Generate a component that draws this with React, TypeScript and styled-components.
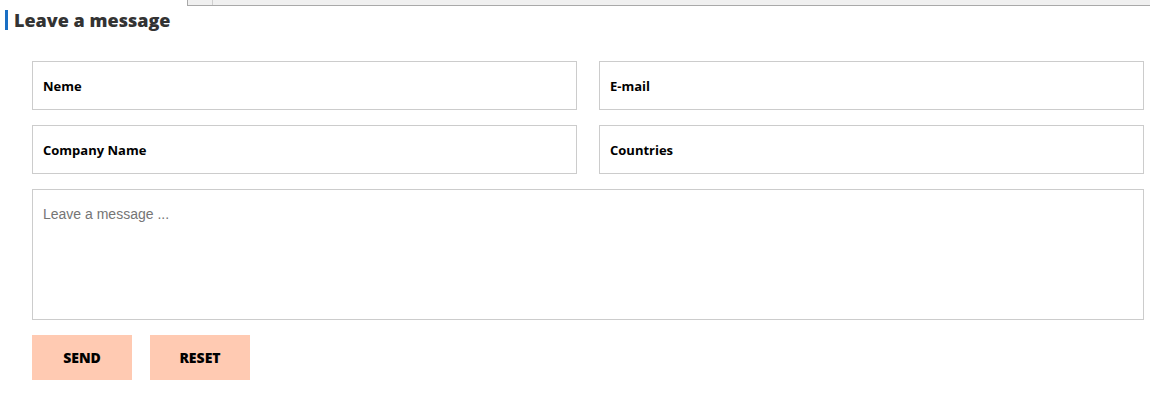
import * as React from "react";
import styled, { createGlobalStyle } from "styled-components";

const GlobalStyle = createGlobalStyle`
  html, body {
    margin: 0;
    padding: 0;
    background: #fff;
  }
  * {
    box-sizing: border-box;
  }
`;

export default function App() {
  return (
    <Page>
      <GlobalStyle />
      <ScrollStrip>
        <StripCell />
      </ScrollStrip>
      <Heading>Leave a message</Heading>
      <Form onSubmit={(e) => e.preventDefault()}>
        <FieldGrid>
          <Field type="text" placeholder="Neme" />
          <Field type="email" placeholder="E-mail" />
          <Field type="text" placeholder="Company Name" />
          <Field type="text" placeholder="Countries" />
          <Message placeholder="Leave a message ..." />
        </FieldGrid>
        <Actions>
          <ActionButton type="submit">SEND</ActionButton>
          <ActionButton type="reset">RESET</ActionButton>
        </Actions>
      </Form>
    </Page>
  );
}

const Page = styled.div`
  width: 1150px;
  height: 397px;
  overflow: hidden;
  font-family: "Open Sans", "Liberation Sans", sans-serif;
`;

const ScrollStrip = styled.div`
  display: flex;
  margin-left: 187px;
  height: 6px;
  background: #f0f0f0;
  border-left: 1px solid #a9a9a9;
  border-bottom: 1px solid #a9a9a9;
`;

const StripCell = styled.div`
  width: 25px;
  border-right: 1px solid #cfcfcf;
`;

const Heading = styled.h2`
  margin: 4px 0 0 5px;
  padding-left: 6px;
  border-left: 3px solid #1a6fc4;
  font-size: 18px;
  line-height: 20px;
  font-weight: 800;
  color: #333;
`;

const Form = styled.form`
  padding: 31px 0 0 32px;
  width: 1144px;
`;

const FieldGrid = styled.div`
  display: grid;
  grid-template-columns: 1fr 1fr;
  column-gap: 22px;
  row-gap: 15px;
`;

const Field = styled.input`
  height: 49px;
  padding: 0 10px;
  border: 1px solid #cccccc;
  background: #fff;
  font-family: "Open Sans", "Liberation Sans", sans-serif;
  font-size: 13px;
  font-weight: 700;
  color: #000;
  outline: none;

  &::placeholder {
    color: #000;
    opacity: 1;
  }
`;

const Message = styled.textarea`
  grid-column: 1 / -1;
  height: 131px;
  padding: 16px 10px;
  border: 1px solid #cccccc;
  resize: none;
  font-family: "Liberation Sans", Arial, sans-serif;
  font-size: 14px;
  color: #333;
  outline: none;

  &::placeholder {
    color: #757575;
    opacity: 1;
  }
`;

const Actions = styled.div`
  display: flex;
  gap: 18px;
  margin-top: 15px;
`;

const ActionButton = styled.button`
  width: 100px;
  height: 45px;
  border: none;
  background: #ffcab2;
  font-family: "Open Sans", "Liberation Sans", sans-serif;
  font-size: 14px;
  font-weight: 800;
  color: #000;
  cursor: pointer;
`;
